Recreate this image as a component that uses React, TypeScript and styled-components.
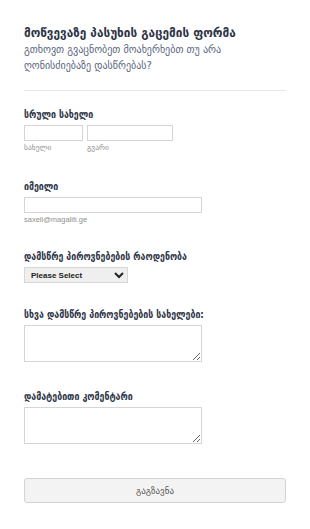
import React from "react";
import styled, { createGlobalStyle } from "styled-components";

const GlobalStyle = createGlobalStyle`
  html, body {
    margin: 0;
    padding: 0;
    background: #fff;
  }
  body {
    font-family: "Liberation Sans", "DejaVu Sans", sans-serif;
    color: #333;
  }
  * {
    box-sizing: border-box;
  }
`;

const Page = styled.form`
  display: flex;
  flex-direction: column;
  padding: 25px 24px 26px;
  width: 310px;
`;

const Header = styled.div`
  padding-bottom: 16px;
  border-bottom: 1px solid #e6e6e6;
`;

const Title = styled.h1`
  margin: 0;
  font-family: "DejaVu Sans", sans-serif;
  font-size: 11.8px;
  line-height: 17px;
  font-weight: bold;
  color: #2c3345;
`;

const Subtitle = styled.p`
  margin: 0;
  font-family: "DejaVu Sans", sans-serif;
  font-size: 10px;
  line-height: 16px;
  color: #57647e;
  padding-right: 40px;
`;

const Field = styled.div<{ $gap: number }>`
  display: flex;
  flex-direction: column;
  align-items: flex-start;
  margin-top: ${(p) => p.$gap}px;
`;

const Label = styled.label`
  font-family: "DejaVu Sans Condensed", "DejaVu Sans", sans-serif;
  font-stretch: condensed;
  font-size: 9.8px;
  line-height: 12px;
  font-weight: bold;
  color: #2c3345;
  margin-bottom: 4px;
`;

const Row = styled.div`
  display: flex;
  gap: 4px;
`;

const Stack = styled.div`
  display: flex;
  flex-direction: column;
`;

const TextInput = styled.input<{ $w: number }>`
  width: ${(p) => p.$w}px;
  height: 16px;
  border: 1px solid #d5d5d5;
  border-radius: 0;
  padding: 0 3px;
  margin: 0;
  font-size: 9px;
`;

const Sub = styled.span`
  font-family: "Liberation Sans", "DejaVu Sans", sans-serif;
  font-size: 7.5px;
  line-height: 10px;
  margin-top: 2px;
  color: #8f8f8f;
`;

const Select = styled.select`
  width: 104px;
  height: 16px;
  font-family: "Liberation Sans", sans-serif;
  font-size: 8px;
  font-weight: bold;
  color: #222;
  background: #efefef;
  border: 1px solid #d6d6d6;
  border-radius: 0;
  padding: 0 2px;
  margin: 0;
`;

const TextArea = styled.textarea`
  width: 178px;
  height: 37px;
  border: 1px solid #d5d5d5;
  border-radius: 0;
  margin: 0;
  padding: 2px;
  resize: both;
`;

const SubmitRow = styled.div`
  margin-top: 34px;
`;

const SubmitButton = styled.button`
  width: 100%;
  height: 25px;
  background: #f3f3f3;
  border: 1px solid #d3d3d3;
  border-radius: 3px;
  font-family: "DejaVu Sans", sans-serif;
  font-size: 9px;
  color: #555;
  cursor: pointer;
`;

export default function App() {
  return (
    <>
      <GlobalStyle />
      <Page onSubmit={(e) => e.preventDefault()}>
        <Header>
          <Title>მოწვევაზე პასუხის გაცემის ფორმა</Title>
          <Subtitle>
            გთხოვთ გვაცნობეთ მოახერხებთ თუ არა ღონისძიებაზე დასწრებას?
          </Subtitle>
        </Header>

        <Field $gap={18}>
          <Label>სრული სახელი</Label>
          <Row>
            <Stack>
              <TextInput $w={59} type="text" />
              <Sub>სახელი</Sub>
            </Stack>
            <Stack>
              <TextInput $w={86} type="text" />
              <Sub>გვარი</Sub>
            </Stack>
          </Row>
        </Field>

        <Field $gap={28}>
          <Label>იმეილი</Label>
          <TextInput $w={178} type="email" />
          <Sub>saxeli@magaliti.ge</Sub>
        </Field>

        <Field $gap={26}>
          <Label>დამსწრე პიროვნებების რაოდენობა</Label>
          <Select defaultValue="">
            <option value="">Please Select</option>
            <option value="1">1</option>
            <option value="2">2</option>
            <option value="3">3</option>
          </Select>
        </Field>

        <Field $gap={26}>
          <Label>სხვა დამსწრე პიროვნებების სახელები:</Label>
          <TextArea />
        </Field>

        <Field $gap={29}>
          <Label>დამატებითი კომენტარი</Label>
          <TextArea />
        </Field>

        <SubmitRow>
          <SubmitButton type="submit">გაგზავნა</SubmitButton>
        </SubmitRow>
      </Page>
    </>
  );
}
